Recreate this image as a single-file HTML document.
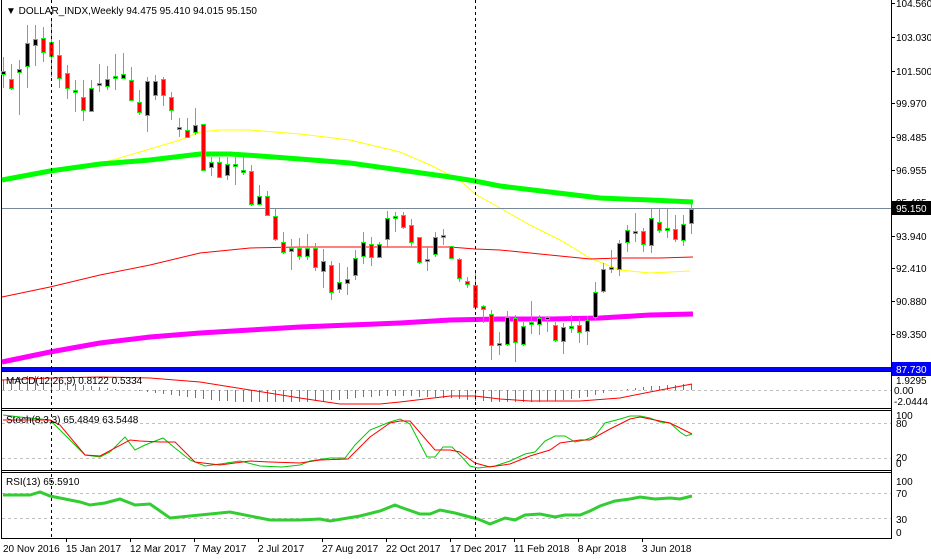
<!DOCTYPE html>
<html><head><meta charset="utf-8"><style>
html,body{margin:0;padding:0;background:#fff;}
svg{display:block;font-family:"Liberation Sans",sans-serif;font-size:10px;}
</style></head><body>
<svg width="931" height="559" viewBox="0 0 931 559" xmlns="http://www.w3.org/2000/svg">
<rect width="931" height="559" fill="#fff"/>
<g stroke="#000" stroke-width="1" fill="none">
<path d="M1.5 0V538.5H891.5V0"/>
<path d="M1.5 371.5H891.5M1.5 408.5H891.5M1.5 410.5H891.5M1.5 470.5H891.5M1.5 472.5H891.5"/>
<path d="M891 3.5h4M891 37.5h4M891 71.5h4M891 103.5h4M891 137.5h4M891 170.5h4M891 202.5h4M891 236.5h4M891 268.5h4M891 301.5h4M891 334.5h4M66.5 538v4M130.5 538v4M194.5 538v4M258.5 538v4M322.5 538v4M386.5 538v4M450.5 538v4M514.5 538v4M578.5 538v4M642.5 538v4"/>
</g>
<g stroke="#c0c0c0" stroke-width="1" stroke-dasharray="3,3">
<path d="M2 390.5H891M2 423.5H891M2 458.5H891M2 493.5H891M2 518.5H891"/>
</g>
<polyline fill="none" stroke="#ff0" stroke-width="1" points="95,165 140,152 180,140 200,132 220,130 250,130 300,134 350,140 400,152 430,165 460,180 475,194 500,208 530,225 560,240 590,258 620,270 650,273 690,271"/>
<polyline fill="none" stroke="#f00" stroke-width="1" points="2,297 50,287 100,275 150,265 200,253 250,248 300,247 350,247 400,247 450,247 475,249 500,250 550,255 590,259 620,258 660,258 693,257"/>
<polyline fill="none" stroke="#00ff00" stroke-width="5" points="2,180 50,171 100,164 150,160 200,154 230,154 260,156 300,159 350,163 400,170 450,177 475,181 500,186 550,192 600,198 650,200 693,202"/>
<polyline fill="none" stroke="#f0f" stroke-width="5" points="2,362 50,352 100,343 150,337 200,333 250,330 300,327 350,325 400,323 450,320 500,319 550,319 600,318 650,315 693,314"/>
<path d="M2 208.5H891" stroke="#778899" stroke-width="1"/>
<rect x="2" y="367" width="889" height="4" fill="#0000ff"/>
<path stroke="#00ff00" stroke-width="1" fill="none" d="M3.5 57V88M11.5 64V90M19.5 60V115M27.5 25V88M35.5 25V66M43.5 27V62M51.5 20V77M59.5 40V88M67.5 65V99M75.5 80V112M83.5 80V121M91.5 80V112M99.5 64V92M107.5 66V90M115.5 54V90M123.5 53V79M131.5 67V100M139.5 90V115M147.5 77V132M155.5 75V100M163.5 77V106M171.5 92V120M179.5 118V137M187.5 118V138M195.5 108V135M203.5 124V170M211.5 157V176M219.5 157V177M227.5 157V180M235.5 157V185M243.5 157V175M251.5 165V206M259.5 185V205M267.5 191V216M275.5 209V241M283.5 232V254M291.5 239V270M299.5 238V260M307.5 234V260M315.5 243V271M323.5 249V288M331.5 261V300M339.5 263V293M347.5 267V295M355.5 250V280M363.5 232V264M371.5 237V266M379.5 242V258M387.5 211V248M395.5 212V232M403.5 212V229M411.5 219V247M419.5 237V264M427.5 246V271M435.5 232V257M443.5 229V245M451.5 246V259M459.5 258V282M467.5 277V288M475.5 270V310M483.5 305V323M491.5 310V360M499.5 332V355M507.5 311V346M515.5 315V362M523.5 322V346M531.5 301V334M539.5 315V335M547.5 316V332M555.5 322V342M563.5 323V354M571.5 315V333M579.5 318V343M587.5 316V345M595.5 282V320M603.5 263V293M611.5 250V273M619.5 240V276M627.5 225V252M635.5 213V242M643.5 228V252M651.5 209V253M659.5 209V233M667.5 209V238M675.5 215V242M683.5 215V246M691.5 204V234"/>
<path fill="#000" stroke="#00ff00" stroke-width="1" d="M1.5 71.5h4v3h-4zM17.5 69.5h4v3h-4zM25.5 43.5h4v23h-4zM33.5 39.5h4v6h-4zM73.5 90.5h4v2h-4zM89.5 88.5h4v23h-4zM97.5 83.5h4v2h-4zM105.5 79.5h4v7h-4zM113.5 76.5h4v2h-4zM121.5 74.5h4v4h-4zM145.5 81.5h4v34h-4zM153.5 81.5h4v14h-4zM177.5 127.5h4v2h-4zM193.5 125.5h4v7h-4zM209.5 162.5h4v5h-4zM225.5 164.5h4v11h-4zM233.5 164.5h4v2h-4zM241.5 170.5h4v2h-4zM257.5 196.5h4v8h-4zM289.5 248.5h4v3h-4zM305.5 248.5h4v8h-4zM321.5 261.5h4v10h-4zM337.5 282.5h4v7h-4zM345.5 279.5h4v4h-4zM353.5 258.5h4v17h-4zM361.5 242.5h4v14h-4zM377.5 244.5h4v13h-4zM385.5 218.5h4v21h-4zM393.5 216.5h4v2h-4zM425.5 259.5h4v2h-4zM433.5 237.5h4v17h-4zM441.5 235.5h4v2h-4zM497.5 343.5h4v2h-4zM505.5 317.5h4v27h-4zM521.5 326.5h4v18h-4zM529.5 322.5h4v2h-4zM537.5 318.5h4v6h-4zM545.5 317.5h4v2h-4zM561.5 327.5h4v14h-4zM569.5 326.5h4v2h-4zM585.5 320.5h4v11h-4zM593.5 292.5h4v25h-4zM601.5 269.5h4v22h-4zM609.5 267.5h4v2h-4zM617.5 243.5h4v26h-4zM625.5 230.5h4v12h-4zM633.5 231.5h4v2h-4zM649.5 218.5h4v27h-4zM665.5 228.5h4v2h-4zM681.5 224.5h4v16h-4zM689.5 209.5h4v14h-4z"/>
<path fill="#f00" stroke="#00ff00" stroke-width="1" d="M9.5 79.5h4v9h-4zM41.5 38.5h4v14h-4zM49.5 42.5h4v14h-4zM57.5 55.5h4v23h-4zM65.5 73.5h4v15h-4zM81.5 97.5h4v13h-4zM129.5 80.5h4v20h-4zM137.5 102.5h4v10h-4zM161.5 79.5h4v16h-4zM169.5 97.5h4v13h-4zM185.5 130.5h4v7h-4zM201.5 124.5h4v46h-4zM217.5 162.5h4v15h-4zM249.5 171.5h4v33h-4zM265.5 196.5h4v19h-4zM273.5 216.5h4v23h-4zM281.5 242.5h4v10h-4zM297.5 248.5h4v8h-4zM313.5 248.5h4v19h-4zM329.5 265.5h4v27h-4zM369.5 244.5h4v13h-4zM401.5 215.5h4v12h-4zM409.5 225.5h4v17h-4zM417.5 237.5h4v25h-4zM449.5 246.5h4v12h-4zM457.5 259.5h4v19h-4zM465.5 281.5h4v3h-4zM473.5 285.5h4v22h-4zM481.5 306.5h4v3h-4zM489.5 314.5h4v31h-4zM513.5 318.5h4v24h-4zM553.5 325.5h4v15h-4zM577.5 325.5h4v7h-4zM641.5 231.5h4v13h-4zM657.5 222.5h4v8h-4zM673.5 229.5h4v10h-4z"/>
<path stroke="#00c800" stroke-width="1" fill="none" d="M3.5 390V380M11.5 390V378M19.5 390V377M27.5 390V376M35.5 390V376M43.5 390V377M51.5 390V378M59.5 390V380M67.5 390V382M75.5 390V384M83.5 390V385M91.5 390V386M99.5 390V387M107.5 390V388M115.5 390V389M139.5 390V391M147.5 390V392M155.5 390V393M163.5 390V394M171.5 390V395M179.5 390V396M187.5 390V397M195.5 390V398M203.5 390V399M211.5 390V400M219.5 390V401M227.5 390V401M235.5 390V402M243.5 390V402M251.5 390V402M259.5 390V402M267.5 390V402M275.5 390V402M283.5 390V402M291.5 390V402M299.5 390V402M307.5 390V402M315.5 390V401M323.5 390V401M331.5 390V400M339.5 390V400M347.5 390V399M355.5 390V398M363.5 390V397M371.5 390V397M379.5 390V396M387.5 390V396M395.5 390V396M403.5 390V396M411.5 390V396M419.5 390V397M427.5 390V397M435.5 390V397M443.5 390V398M451.5 390V398M459.5 390V399M467.5 390V400M475.5 390V401M483.5 390V401M491.5 390V402M499.5 390V402M507.5 390V402M515.5 390V402M523.5 390V402M531.5 390V402M539.5 390V402M547.5 390V401M555.5 390V401M563.5 390V400M571.5 390V399M579.5 390V398M587.5 390V397M595.5 390V395M603.5 390V393M611.5 390V391M627.5 390V389M635.5 390V388M643.5 390V387M651.5 390V386M659.5 390V386M667.5 390V385M675.5 390V385M683.5 390V384M691.5 390V384"/>
<polyline fill="none" stroke="#f00" stroke-width="1" points="2,380 50,378 100,377 150,378 200,382 250,390 300,398 340,404 380,404 400,402 450,396 475,396 500,399 530,401 580,401 620,398 650,392 692,384"/>
<polyline fill="none" stroke="#00c800" stroke-width="1" points="3,415 20,417 50,420 70,440 85,455 100,457 110,452 125,437 135,450 145,445 163,438 175,448 190,460 205,466 220,464 240,461 260,466 282,467 300,465 310,461 330,458 345,458 355,445 370,430 390,422 400,419 410,424 427,457 435,457 443,447 452,447 460,455 470,466 478,468 495,466 510,461 525,454 535,452 545,441 555,436 565,436 575,442 585,440 595,436 605,423 620,419 630,416 640,416 650,418 660,422 670,423 680,432 686,436 692,434"/>
<polyline fill="none" stroke="#f00" stroke-width="1" points="3,420 50,420 60,425 85,455 100,456 130,440 140,441 160,442 175,442 195,462 220,465 250,461 270,462 300,463 320,460 348,459 370,437 390,423 400,421 410,421 435,450 450,450 460,452 475,463 490,467 510,464 530,456 550,450 560,443 580,440 590,440 610,429 630,419 640,417 660,421 670,423 692,434"/>
<polyline fill="none" stroke="#32cd32" stroke-width="3" points="3,495 30,495 40,492 50,496 60,498 80,502 90,505 105,503 120,499 135,505 150,504 170,518 200,515 230,512 270,520 300,520 320,519 330,521 360,516 380,511 395,505 400,507 420,514 430,514 440,510 455,513 470,517 478,519 490,524 505,518 515,520 525,515 540,514 555,517 565,515 580,515 590,511 600,506 615,501 630,499 640,497 655,499 670,498 680,499 692,496"/>
<path d="M51.5 0V538M475.5 0V538" stroke="#000" stroke-width="1" stroke-dasharray="3,3"/>
<g fill="#000">
<text x="6" y="14">▼ DOLLAR_INDX,Weekly  94.475 95.410 94.015 95.150</text>
<text x="6" y="384">MACD(12,26,9) 0.8122 0.5334</text>
<text x="6" y="423">Stoch(8,3,3) 65.4849 63.5448</text>
<text x="6" y="485">RSI(13) 65.5910</text>
</g>
<g fill="#000">
<text x="896" y="7">104.560</text>
<text x="896" y="41">103.030</text>
<text x="896" y="75">101.500</text>
<text x="896" y="107">99.970</text>
<text x="896" y="141">98.485</text>
<text x="896" y="174">96.955</text>
<text x="896" y="206">95.425</text>
<text x="896" y="240">93.940</text>
<text x="896" y="272">92.410</text>
<text x="896" y="305">90.880</text>
<text x="896" y="338">89.350</text>
<text x="896" y="384">1.9295</text>
<text x="894" y="394">0.00</text>
<text x="894" y="405">-2.0444</text>
<text x="896" y="419">100</text>
<text x="896" y="427">80</text>
<text x="896" y="461">20</text>
<text x="896" y="467">0</text>
<text x="896" y="485">100</text>
<text x="896" y="497">70</text>
<text x="896" y="523">30</text>
<text x="896" y="536">0</text>
</g>
<rect x="892" y="201" width="39" height="14" fill="#000"/>
<text x="896" y="212" fill="#fff">95.150</text>
<rect x="892" y="362" width="39" height="14" fill="#0000ff"/>
<text x="896" y="373" fill="#fff">87.730</text>
<g fill="#000">
<text x="3" y="552">20 Nov 2016</text>
<text x="66" y="552">15 Jan 2017</text>
<text x="130" y="552">12 Mar 2017</text>
<text x="194" y="552">7 May 2017</text>
<text x="258" y="552">2 Jul 2017</text>
<text x="322" y="552">27 Aug 2017</text>
<text x="386" y="552">22 Oct 2017</text>
<text x="450" y="552">17 Dec 2017</text>
<text x="514" y="552">11 Feb 2018</text>
<text x="578" y="552">8 Apr 2018</text>
<text x="642" y="552">3 Jun 2018</text>
</g>
</svg>
</body></html>
